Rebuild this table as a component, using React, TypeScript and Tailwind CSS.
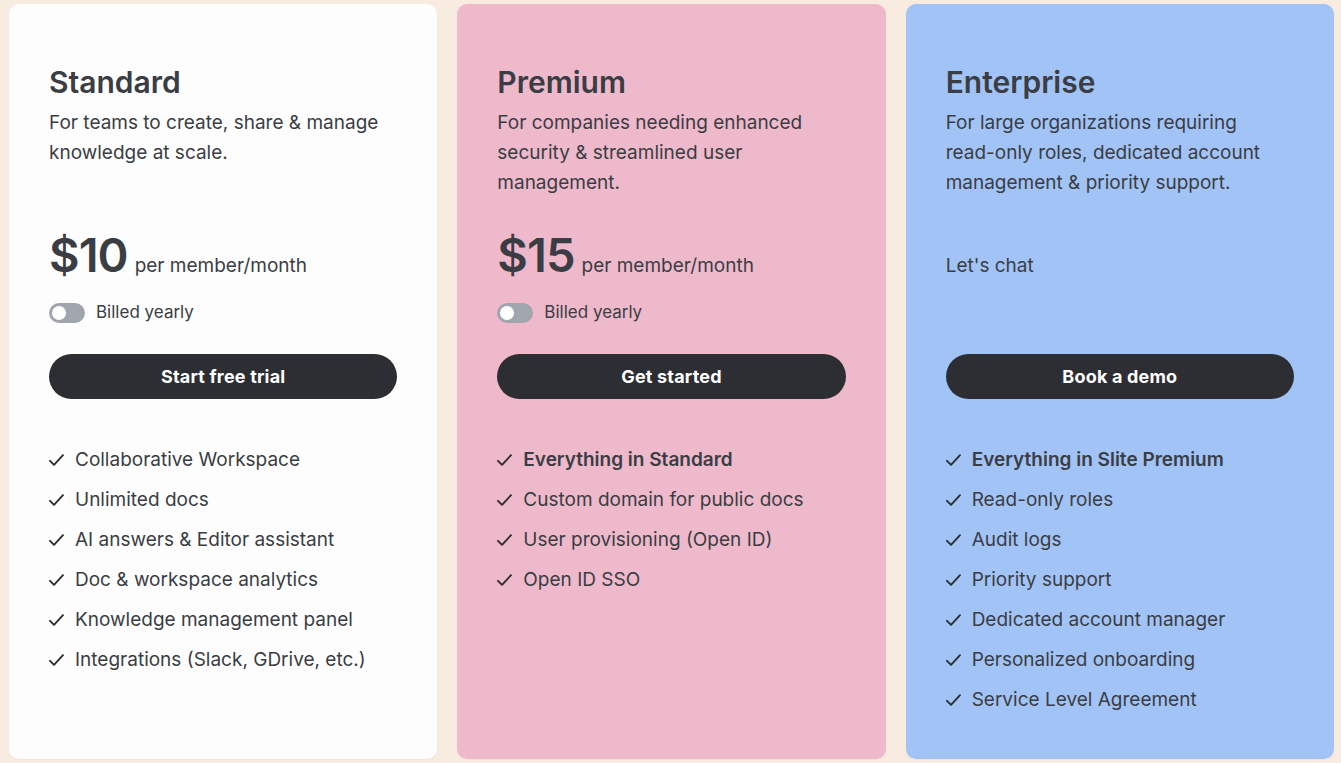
import React from 'react';

type Plan = {
  name: string;
  description: string;
  price?: string;
  chat?: string;
  toggle: boolean;
  cta: string;
  features: string[];
  boldFirst: boolean;
  bg: string;
};

const plans: Plan[] = [
  {
    name: 'Standard',
    description: 'For teams to create, share & manage knowledge at scale.',
    price: '$10',
    toggle: true,
    cta: 'Start free trial',
    features: [
      'Collaborative Workspace',
      'Unlimited docs',
      'AI answers & Editor assistant',
      'Doc & workspace analytics',
      'Knowledge management panel',
      'Integrations (Slack, GDrive, etc.)',
    ],
    boldFirst: false,
    bg: 'bg-[#fdfdfd]',
  },
  {
    name: 'Premium',
    description: 'For companies needing enhanced security & streamlined user management.',
    price: '$15',
    toggle: true,
    cta: 'Get started',
    features: [
      'Everything in Standard',
      'Custom domain for public docs',
      'User provisioning (Open ID)',
      'Open ID SSO',
    ],
    boldFirst: true,
    bg: 'bg-[#eeb9cb]',
  },
  {
    name: 'Enterprise',
    description: 'For large organizations requiring read-only roles, dedicated account management & priority support.',
    chat: "Let's chat",
    toggle: false,
    cta: 'Book a demo',
    features: [
      'Everything in Slite Premium',
      'Read-only roles',
      'Audit logs',
      'Priority support',
      'Dedicated account manager',
      'Personalized onboarding',
      'Service Level Agreement',
    ],
    boldFirst: true,
    bg: 'bg-[#a2c3f5]',
  },
];

function Check() {
  return (
    <svg width="15" height="13" viewBox="0 0 15 13" fill="none" aria-hidden="true" className="shrink-0">
      <path d="M1 6.8 L5 10.8 L14 1.2" stroke="#2d2e33" strokeWidth="1.9" strokeLinecap="round" strokeLinejoin="round" />
    </svg>
  );
}

function PlanCard({ plan }: { plan: Plan }) {
  return (
    <div className={`${plan.bg} flex flex-col rounded-[10px] px-10 pt-[58px] pb-[39px] shadow-[0_1px_2px_rgba(0,0,0,0.04)]`}>
      <h2 className="text-[30px] leading-[40px] font-semibold text-[#3a3d44]">{plan.name}</h2>
      <p className="mt-[6px] min-h-[90px] max-w-[336px] text-[19px] leading-[30px] text-[#3a3d44]">{plan.description}</p>
      <div className="mt-[33px] flex h-[47px] items-baseline leading-none">
        {plan.price ? (
          <>
            <span className="text-[47px] font-semibold tracking-[-0.02em] text-[#3a3d44]">{plan.price}</span>
            <span className="ml-[7px] text-[19px] text-[#3a3d44]">per member/month</span>
          </>
        ) : (
          <>
            <span className="invisible w-0 overflow-hidden text-[47px]">$</span>
            <span className="text-[19px] text-[#3a3d44]">{plan.chat}</span>
          </>
        )}
      </div>
      <div className={`mt-[25px] flex h-5 items-center gap-[11px] ${plan.toggle ? '' : 'invisible'}`}>
        <span className="flex h-5 w-9 items-center rounded-full bg-[#a1a5ae] px-[3px]">
          <span className="h-[14px] w-[14px] rounded-full bg-white" />
        </span>
        <span className="text-[17px] text-[#3a3d44]">Billed yearly</span>
      </div>
      <button className="mt-[31px] h-[45px] w-full rounded-full bg-[#2d2e33] text-[18px] font-bold tracking-[0.01em] text-white">
        {plan.cta}
      </button>
      <ul className="mt-[41px] flex flex-col">
        {plan.features.map((f, i) => (
          <li key={f} className="flex h-10 items-center gap-[11px] text-[19px] text-[#3a3d44]">
            <Check />
            <span className={plan.boldFirst && i === 0 ? 'font-semibold' : ''}>{f}</span>
          </li>
        ))}
      </ul>
    </div>
  );
}

export default function App() {
  return (
    <div className="min-h-[763px] bg-[#f8ece1] pt-1 pr-[7px] pb-1 pl-[9px] font-['Inter','Liberation_Sans',sans-serif]">
      <div className="grid grid-cols-3 gap-5">
        {plans.map((p) => (
          <PlanCard key={p.name} plan={p} />
        ))}
      </div>
    </div>
  );
}
